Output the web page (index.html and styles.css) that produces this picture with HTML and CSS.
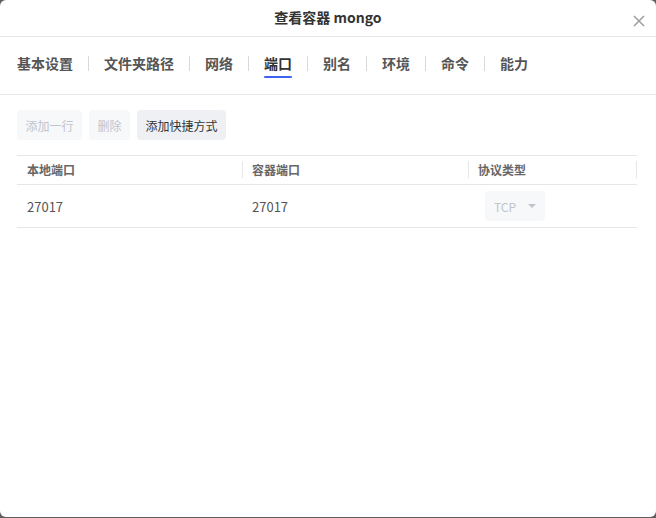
FILE: index.html
```html
<!DOCTYPE html>
<html lang="zh">
<head>
<meta charset="utf-8">
<title>查看容器 mongo</title>
<link rel="stylesheet" href="styles.css">
</head>
<body>
<div class="dialog">
  <div class="header">
    <div class="title">查看容器 mongo</div>
    <button class="close" aria-label="关闭">
      <svg width="12" height="12" viewBox="0 0 12 12"><path d="M1 1L11 11M11 1L1 11" stroke="#a0a0a0" stroke-width="1.6" fill="none"/></svg>
    </button>
  </div>
  <div class="tabs">
    <span class="tab">基本设置</span><span class="sep"></span>
    <span class="tab">文件夹路径</span><span class="sep"></span>
    <span class="tab">网络</span><span class="sep"></span>
    <span class="tab active">端口</span><span class="sep"></span>
    <span class="tab">别名</span><span class="sep"></span>
    <span class="tab">环境</span><span class="sep"></span>
    <span class="tab">命令</span><span class="sep"></span>
    <span class="tab">能力</span>
  </div>
  <div class="content">
    <div class="toolbar">
      <button class="btn disabled">添加一行</button>
      <button class="btn disabled">删除</button>
      <button class="btn">添加快捷方式</button>
    </div>
    <div class="table">
      <div class="row head">
        <div class="cell">本地端口</div>
        <div class="cell">容器端口</div>
        <div class="cell">协议类型</div>
      </div>
      <div class="row body">
        <div class="cell">27017</div>
        <div class="cell">27017</div>
        <div class="cell"><span class="select">TCP<span class="caret"></span></span></div>
      </div>
    </div>
  </div>
</div>
</body>
</html>
```
FILE: styles.css
```css
html, body {
  margin: 0;
  padding: 0;
  background: #5f5f5f;
}
body {
  font-family: "Noto Sans CJK SC", "Noto Sans", sans-serif;
  color: #333;
}
.dialog {
  width: 656px;
  height: 517px;
  background: #fff;
  border-radius: 6px;
  overflow: hidden;
}
.header {
  height: 36px;
  border-bottom: 1px solid #e6e6e6;
  display: flex;
  align-items: center;
  justify-content: center;
  position: relative;
}
.title {
  font-size: 14px;
  font-weight: 700;
  color: #333;
  line-height: 20px;
  position: relative;
  top: -1px;
}
.close {
  position: absolute;
  right: 11px;
  top: 15px;
  border: 0;
  background: none;
  padding: 0;
  width: 12px;
  height: 12px;
  display: flex;
}
.tabs {
  height: 57px;
  border-bottom: 1px solid #e6e6e6;
  display: flex;
  align-items: center;
  padding: 0 0 0 17px;
}
.tab {
  font-size: 14px;
  font-weight: 700;
  color: #555;
  line-height: 20px;
  position: relative;
  top: -3px;
}
.tab.active {
  color: #333;
}
.tab.active::after {
  content: "";
  position: absolute;
  left: 0;
  right: 0;
  bottom: -5px;
  height: 2px;
  background: #3d63f2;
  border-radius: 1px;
}
.sep {
  width: 1px;
  height: 15px;
  background: #d9d9d9;
  margin: 0 15px;
  position: relative;
  top: -2px;
}
.content {
  padding: 15px 19px 0 17px;
}
.toolbar {
  display: flex;
  gap: 7px;
}
.btn {
  font-family: inherit;
  font-size: 12px;
  height: 30px;
  padding: 0 8.5px;
  border: 0;
  border-radius: 4px;
  background: #eff0f3;
  color: #333;
}
.btn.disabled {
  background: #f7f8fa;
  color: #c0c4cc;
}
.table {
  margin-top: 15px;
  border-top: 1px solid #e6e6e6;
}
.row {
  display: grid;
  grid-template-columns: 225px 226px 169px;
  border-bottom: 1px solid #e6e6e6;
}
.row.head {
  height: 28px;
}
.row.body {
  height: 42px;
}
.cell {
  display: flex;
  align-items: center;
  padding-left: 10px;
  font-size: 12px;
  position: relative;
}
.head .cell {
  font-weight: 700;
  color: #666;
  top: -1px;
}
.head .cell + .cell::before,
.head .cell:last-child::after {
  content: "";
  position: absolute;
  top: 6px;
  bottom: 5px;
  width: 1px;
  background: #e6e6e6;
}
.head .cell + .cell::before { left: 0; }
.head .cell:last-child::after { right: 0; }
.body .cell {
  color: #555;
  font-size: 13px;
}
.body .cell:last-child {
  padding-left: 17px;
}
.select {
  display: inline-flex;
  align-items: center;
  width: 60px;
  height: 30px;
  box-sizing: border-box;
  padding-left: 9px;
  background: #f7f8fa;
  border-radius: 4px;
  color: #c0c4cc;
  font-size: 12px;
}
.caret {
  width: 0;
  height: 0;
  border-left: 4px solid transparent;
  border-right: 4px solid transparent;
  border-top: 4px solid #c0c4cc;
  margin-left: 12px;
}
```
